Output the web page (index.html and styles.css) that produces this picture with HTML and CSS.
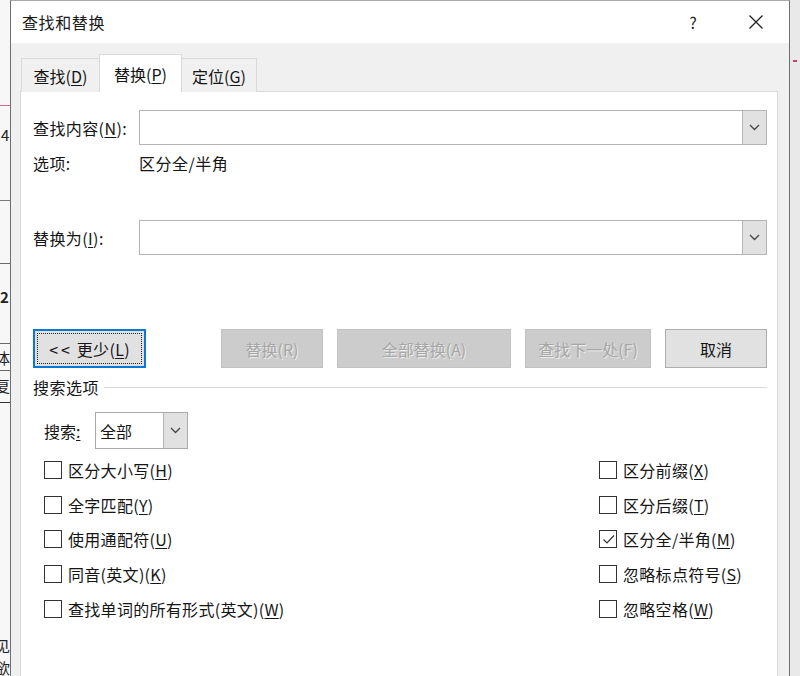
FILE: index.html
```html
<!DOCTYPE html>
<html lang="zh-CN">
<head>
<meta charset="utf-8">
<title>查找和替换</title>
<link rel="stylesheet" href="styles.css">
</head>
<body>
<div class="stage">
  <div class="doc">
    <div class="d-seg d-red"></div>
    <div class="d-seg d-four"><span>4</span></div>
    <div class="d-seg d-a"></div>
    <div class="d-seg d-two"><span>2</span></div>
    <div class="d-seg d-ti"><span>体</span></div>
    <div class="d-seg d-fu"><span>复</span></div>
    <div class="d-seg d-gap"></div>
    <div class="d-seg d-jian"><span>见</span></div>
    <div class="d-seg d-yu"><span>欲</span></div>
  </div>

  <div class="dialog">
    <div class="titlebar">
      <div class="title">查找和替换</div>
      <div class="tb-btn help">?</div>
      <div class="tb-btn close">
        <svg width="16" height="16" viewBox="0 0 16 16"><path d="M1.5 1.5 L14.5 14.5 M14.5 1.5 L1.5 14.5" stroke="#222" stroke-width="1.3" fill="none"/></svg>
      </div>
    </div>

    <div class="body">
      <div class="tabs">
        <div class="tab t1">查找(<u>D</u>)</div>
        <div class="tab t2 active">替换(<u>P</u>)</div>
        <div class="tab t3">定位(<u>G</u>)</div>
      </div>

      <div class="panel">
        <div class="field first">
          <div class="label">查找内容(<u>N</u>):</div>
          <div class="combo">
            <div class="combo-text"></div>
            <div class="combo-btn"><svg width="11" height="7" viewBox="0 0 11 7"><path d="M1 1 L5.5 5.5 L10 1" stroke="#444" stroke-width="1.3" fill="none"/></svg></div>
          </div>
        </div>
        <div class="opts">
          <div class="label">选项:</div>
          <div class="opt-val">区分全/半角</div>
        </div>
        <div class="field second">
          <div class="label">替换为(<u>I</u>):</div>
          <div class="combo">
            <div class="combo-text"></div>
            <div class="combo-btn"><svg width="11" height="7" viewBox="0 0 11 7"><path d="M1 1 L5.5 5.5 L10 1" stroke="#444" stroke-width="1.3" fill="none"/></svg></div>
          </div>
        </div>

        <div class="buttons">
          <div class="btn focus"><span class="lt">&lt;&lt;</span>&nbsp;更少(<u>L</u>)</div>
          <div class="btn-group">
            <div class="btn disabled b-rep">替换(R)</div>
            <div class="btn disabled b-all">全部替换(A)</div>
            <div class="btn disabled b-next">查找下一处(F)</div>
            <div class="btn b-cancel">取消</div>
          </div>
        </div>

        <div class="section">
          <span class="section-title">搜索选项</span>
          <span class="section-line"></span>
        </div>

        <div class="search-row">
          <div class="search-label">搜索<u>:</u></div>
          <div class="select">
            <div class="select-text">全部</div>
            <div class="combo-btn"><svg width="11" height="7" viewBox="0 0 11 7"><path d="M1 1 L5.5 5.5 L10 1" stroke="#444" stroke-width="1.3" fill="none"/></svg></div>
          </div>
        </div>

        <div class="checks">
          <div class="chk"><span class="box"></span>区分大小写(<u>H</u>)</div>
          <div class="chk"><span class="box"></span>全字匹配(<u>Y</u>)</div>
          <div class="chk"><span class="box"></span>使用通配符(<u>U</u>)</div>
          <div class="chk"><span class="box"></span>同音(英文)(<u>K</u>)</div>
          <div class="chk"><span class="box"></span>查找单词的所有形式(英文)(<u>W</u>)</div>
          <div class="chk"><span class="box"></span>区分前缀(<u>X</u>)</div>
          <div class="chk"><span class="box"></span>区分后缀(<u>T</u>)</div>
          <div class="chk"><span class="box checked"><svg width="15" height="15" viewBox="0 0 15 15"><path d="M2.5 7.5 L6 11 L13 3.5" stroke="#333" stroke-width="1.2" fill="none"/></svg></span>区分全/半角(<u>M</u>)</div>
          <div class="chk"><span class="box"></span>忽略标点符号(<u>S</u>)</div>
          <div class="chk"><span class="box"></span>忽略空格(<u>W</u>)</div>
        </div>
      </div>
    </div>
  </div>

  <div class="right-strip">
    <div class="red-tick"></div>
  </div>
</div>
</body>
</html>
```

FILE: styles.css
```css
* { box-sizing: border-box; }

html, body {
  margin: 0;
  padding: 0;
  width: 800px;
  height: 676px;
  overflow: hidden;
}

body {
  font-family: "Noto Sans CJK SC", "Noto Sans", sans-serif;
  font-size: 16px;
  color: #151515;
  background: #ededed;
}

u { text-decoration-thickness: 1px; text-underline-offset: 2px; }

.stage {
  display: flex;
  width: 800px;
  height: 676px;
}

/* background document strip */
.doc {
  width: 10px;
  flex: none;
  background: #f7f7f7;
  overflow: hidden;
  font-size: 15px;
  color: #222;
}
.d-seg { overflow: hidden; white-space: nowrap; }
.d-seg span { display: block; line-height: 18px; }
.d-red { height: 106px; border-bottom: 1px solid #cf6a8c; }
.d-four { height: 95px; border-bottom: 1px solid #7a7a7a; padding-top: 20px; padding-left: 1px; }
.d-a { height: 63px; border-bottom: 1px solid #6a6a6a; }
.d-two { height: 80px; border-bottom: 1px solid #6a6a6a; padding-top: 24px; font-weight: bold; }
.d-ti { height: 27px; border-bottom: 1px solid #6a6a6a; padding-top: 5px; }
.d-ti span { margin-left: -5px; }
.d-fu { height: 32px; border-bottom: 1px solid #333; padding-top: 6px; }
.d-fu span { margin-left: -5px; }
.d-gap { height: 234px; }
.d-jian { height: 22px; }
.d-jian span { margin-left: -5px; }
.d-yu { height: 22px; }
.d-yu span { margin-left: -5px; }

/* dialog */
.dialog {
  width: 780px;
  flex: none;
  display: flex;
  flex-direction: column;
  border-left: 1px solid #6f6f6f;
  border-right: 1px solid #6f6f6f;
  border-top: 1px solid #a9a9a9;
  background: #f0f0f0;
}

.titlebar {
  height: 42px;
  flex: none;
  background: #fff;
  display: flex;
  align-items: center;
  padding-left: 11px;
}
.title {
  flex: 1;
  font-size: 16px;
  letter-spacing: 0.6px;
  color: #1a1a1a;
}
.tb-btn {
  width: 46px;
  height: 42px;
  display: flex;
  align-items: center;
  justify-content: center;
  color: #222;
}
.help { margin-right: 17px; font-size: 16px; }
.close { margin-right: 10px; }

.body {
  flex: 1;
  display: flex;
  flex-direction: column;
  padding-top: 12px;
  background: #f0f0f0;
}

.tabs {
  display: flex;
  align-items: flex-end;
  height: 37px;
  padding-left: 10px;
  position: relative;
  z-index: 1;
  margin-bottom: -1px;
}
.tab {
  height: 34px;
  border: 1px solid #d9d9d9;
  border-bottom: none;
  display: flex;
  align-items: center;
  justify-content: center;
  font-size: 16px;
  color: #151515;
  background: #f0f0f0;
}
.t1 { width: 78px; border-right: none; }
.t2 { width: 83px; }
.t3 { width: 75px; border-left: none; }
.tab.active {
  height: 38px;
  background: #fff;
}

.panel {
  flex: 1;
  margin: 0 11px 0 9px;
  background: #fff;
  border: 1px solid #d9d9d9;
  border-bottom: none;
  padding: 18px 10px 0 12px;
  display: flex;
  flex-direction: column;
}

.field {
  display: flex;
  align-items: center;
  height: 35px;
}
.second { margin-top: 39px; }
.label {
  width: 106px;
  flex: none;
  letter-spacing: 0.4px;
}
.combo {
  flex: 1;
  height: 35px;
  border: 1px solid #b4b4b4;
  display: flex;
  background: #fff;
}
.combo-text { flex: 1; }
.combo-btn {
  width: 24px;
  flex: none;
  background: #e1e1e1;
  border-left: 1px solid #b4b4b4;
  display: flex;
  align-items: center;
  justify-content: center;
}

.opts {
  display: flex;
  align-items: center;
  height: 36px;
}
.opt-val { letter-spacing: 0.5px; }

.buttons {
  margin-top: 74px;
  height: 39px;
  display: flex;
  justify-content: space-between;
}
.btn {
  height: 39px;
  display: flex;
  align-items: center;
  justify-content: center;
  background: #e1e1e1;
  border: 1px solid #adadad;
  font-size: 16px;
  color: #151515;
}
.btn.focus {
  width: 113px;
  border: 2px solid #0a78d4;
  outline: 1px dotted #222;
  outline-offset: -5px;
  letter-spacing: 0.3px;
}
.lt { letter-spacing: 3px; }
.btn-group { display: flex; gap: 14px; }
.btn.disabled {
  background: #cccccc;
  border-color: #c2c2c2;
  color: #a6a6a6;
  text-shadow: 1px 1px 0 #ececec;
}
.b-rep { width: 102px; }
.b-all { width: 174px; }
.b-next { width: 126px; }
.b-cancel { width: 102px; }

.section {
  height: 38px;
  display: flex;
  align-items: center;
}
.section-title { letter-spacing: 0.5px; }
.section-line {
  flex: 1;
  height: 1px;
  background: #d8d8d8;
  margin-left: 5px;
}

.search-row {
  margin-top: 6px;
  padding-left: 11px;
  display: flex;
  align-items: center;
  height: 37px;
}
.search-label { width: 51px; flex: none; }
.select {
  width: 93px;
  height: 37px;
  border: 1px solid #a9a9a9;
  display: flex;
  background: #fff;
}
.select-text {
  flex: 1;
  display: flex;
  align-items: center;
  padding-left: 4px;
}

.checks {
  margin-top: 4px;
  padding-left: 11px;
  display: grid;
  grid-template-columns: 555px 1fr;
  grid-template-rows: repeat(5, 34.6px);
  grid-auto-flow: column;
}
.chk {
  display: flex;
  align-items: center;
  letter-spacing: 0.3px;
  white-space: nowrap;
}
.box {
  width: 18px;
  height: 18px;
  border: 1px solid #333;
  background: #fff;
  margin-right: 6px;
  flex: none;
  display: flex;
  align-items: center;
  justify-content: center;
}

.right-strip {
  flex: 1;
  background: #e9e9e9;
  padding-top: 60px;
}
.red-tick {
  width: 4px;
  height: 2px;
  margin-left: 3px;
  background: #c2456e;
}
```
